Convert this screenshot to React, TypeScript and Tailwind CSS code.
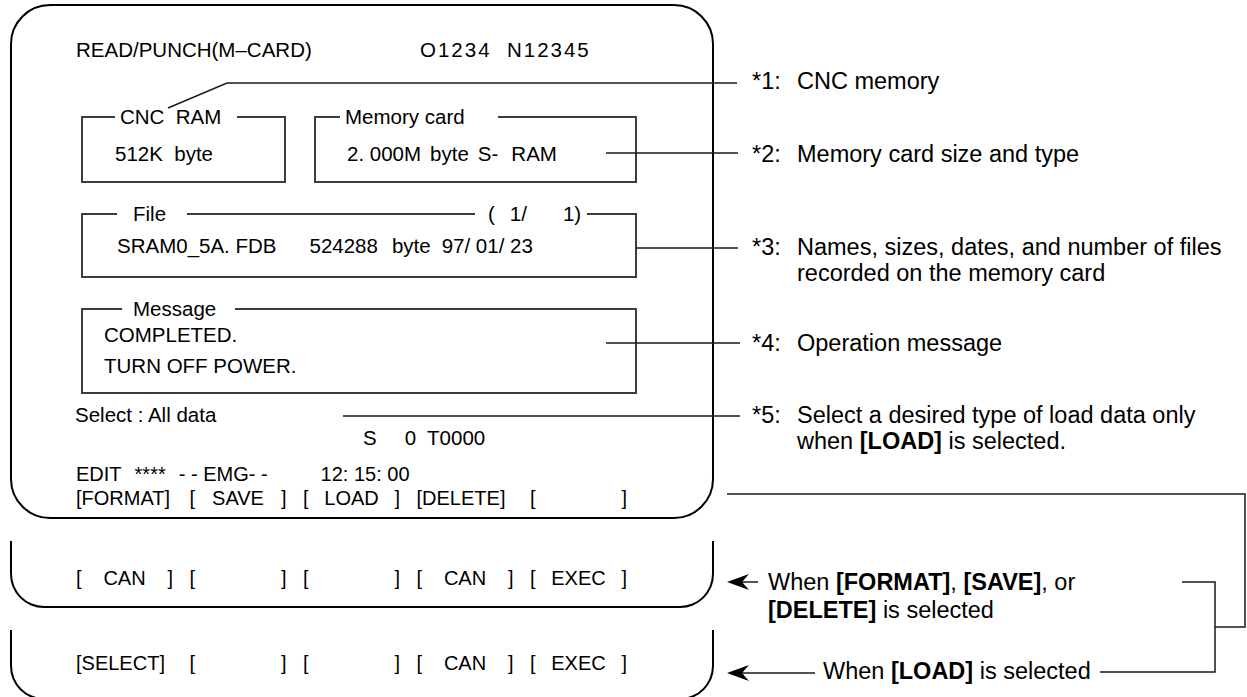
import type { ReactNode } from 'react'

// thin dark segment of a frame's top line
const Seg = ({ w }: { w?: string }) => <span className={`h-[2px] bg-[#3c3c3c] ${w ?? 'flex-1'}`} />

const Frame = ({ top, box, children, className }: { top: ReactNode; box: string; children: ReactNode; className?: string }) => (
    <div className={`flex flex-col ${className ?? ''}`}>
        <div className="relative -mb-[13px] flex h-6 items-center">{top}</div>
        <div className={`border-x-2 border-b-2 border-[#3c3c3c] ${box}`}>{children}</div>
    </div>
)

// soft keys: long labels fill their bracket, short ones are centred in it
const Keys = ({ keys }: { keys: string[] }) => (
    <div className="ml-[64px] grid grid-cols-[repeat(5,97px)] gap-x-[16.5px] text-[20px] leading-6">
        {keys.map((k, i) =>
            k.length >= 6 ? (
                <span key={i}>[{k}]</span>
            ) : (
                <div key={i} className="flex justify-between">
                    <span>[</span>
                    <span>{k}</span>
                    <span>]</span>
                </div>
            )
        )}
    </div>
)

const Note = ({ n, children, className }: { n: number; children: ReactNode; className?: string }) => (
    <div className={`flex leading-[26px] ${className ?? ''}`}>
        <span className="w-[45px] shrink-0">*{n}:</span>
        <span>{children}</span>
    </div>
)

const App = () => {
    return (
        <div className="relative h-[697px] w-[1247px] overflow-hidden bg-white font-[Liberation_Sans,Arial,sans-serif] text-black">
            <div className="flex">

                {/* screens */}
                <div className="flex w-[720px] shrink-0 flex-col pl-[10px] pt-[4px]">
                    <div className="flex h-[515px] w-[704px] flex-col rounded-[40px] border-2 border-black text-[20.5px] leading-6">
                        <div className="ml-[64px] mt-[32px] flex">
                            <span className="w-[344px]">READ/PUNCH(M–CARD)</span>
                            <span className="whitespace-pre tracking-[2px]">O1234  N12345</span>
                        </div>

                        <div className="ml-[69px] mt-[43px] flex gap-[28px]">
                            <Frame
                                className="w-[205px]"
                                box="h-[67px] pl-[32px] pt-[26px]"
                                top={<>
                                    <Seg w="w-[34px]" />
                                    <span className="w-[122px] whitespace-pre pl-[5px]">CNC  RAM</span>
                                    <Seg />
                                </>}
                            >
                                <span className="whitespace-pre">512K  byte</span>
                            </Frame>
                            <Frame
                                className="w-[323px]"
                                box="h-[67px] pl-[31px] pt-[26px]"
                                top={<>
                                    <Seg w="w-[26px]" />
                                    <span className="w-[158px] pl-[5px]">Memory card</span>
                                    <Seg />
                                </>}
                            >
                                <div className="flex">
                                    <span>2. 000M</span>
                                    <span className="ml-[9px]">byte</span>
                                    <span className="ml-[9px]">S-</span>
                                    <span className="ml-[13px]">RAM</span>
                                </div>
                            </Frame>
                        </div>

                        <Frame
                            className="ml-[69px] mt-[19px] w-[556px]"
                            box="h-[65px] pl-[34px] pt-[21px]"
                            top={<>
                                <Seg w="w-[36px]" />
                                <span className="w-[70px] pl-[16px]">File</span>
                                <Seg />
                                <span className="flex w-[112px] pl-[13px]">
                                    <span>(</span>
                                    <span className="ml-[15px]">1/</span>
                                    <span className="ml-[36px]">1)</span>
                                </span>
                                <Seg w="w-[50px]" />
                            </>}
                        >
                            <div className="flex">
                                <span>SRAM0_5A. FDB</span>
                                <span className="ml-[33px]">524288</span>
                                <span className="ml-[14px]">byte</span>
                                <span className="ml-[11px]">97/ 01/ 23</span>
                            </div>
                        </Frame>

                        <Frame
                            className="ml-[69px] mt-[19px] w-[556px]"
                            box="flex h-[86px] flex-col gap-[7px] pl-[21px] pt-[15px]"
                            top={<>
                                <Seg w="w-[41px]" />
                                <span className="w-[113px] pl-[11px]">Message</span>
                                <Seg />
                            </>}
                        >
                            <span>COMPLETED.</span>
                            <span>TURN OFF POWER.</span>
                        </Frame>

                        <div className="ml-[63px] mt-[9px] leading-[23px]">Select : All data</div>
                        <div className="ml-[351px] flex">
                            <span>S</span>
                            <span className="ml-[28px]">0</span>
                            <span className="ml-[11px]">T0000</span>
                        </div>

                        <div className="ml-[64px] mt-[12px] flex text-[20px]">
                            <span>EDIT</span>
                            <span className="ml-[13px]">****</span>
                            <span className="ml-[13px]">- - EMG- -</span>
                            <span className="ml-[53px]">12: 15: 00</span>
                        </div>
                        <Keys keys={['FORMAT', 'SAVE', 'LOAD', 'DELETE', '']} />
                    </div>

                    <div className="mt-[22px] h-[67px] w-[704px] rounded-b-[34px] border-x-2 border-b-2 border-black pt-[25px]">
                        <Keys keys={['CAN', '', '', 'CAN', 'EXEC']} />
                    </div>
                    <div className="mt-[22px] h-[70px] w-[704px] rounded-b-[34px] border-x-2 border-b-2 border-black pt-[21px]">
                        <Keys keys={['SELECT', '', '', 'CAN', 'EXEC']} />
                    </div>
                </div>

                {/* annotations */}
                <div className="flex flex-1 flex-col pl-[32px] text-[23.5px]">
                    <Note n={1} className="mt-[68px]">CNC memory</Note>
                    <Note n={2} className="mt-[47px]">Memory card size and type</Note>
                    <Note n={3} className="mt-[67px]">
                        Names, sizes, dates, and number of files<br />recorded on the memory card
                    </Note>
                    <Note n={4} className="mt-[44px]">Operation message</Note>
                    <Note n={5} className="mt-[46px]">
                        Select a desired type of load data only<br />when <b>[LOAD]</b> is selected.
                    </Note>

                    <p className="ml-[16px] mt-[114px] leading-[28px]">
                        When <b>[FORMAT]</b>, <b>[SAVE]</b>, or<br /><b>[DELETE]</b> is selected
                    </p>
                    <p className="ml-[71px] mt-[34px] leading-[26px]">
                        When <b>[LOAD]</b> is selected
                    </p>
                </div>
            </div>

            {/* leader lines and arrows */}
            <svg
                className="pointer-events-none absolute inset-0"
                width={1247}
                height={697}
                viewBox="0 0 1247 697"
                fill="none"
                stroke="#1a1a1a"
                strokeWidth={1.5}
            >
                <polyline points="168,108 227,83 737,83" />
                <line x1={606} y1={153} x2={738} y2={153} />
                <line x1={636} y1={248} x2={738} y2={248} />
                <line x1={606} y1={343} x2={740} y2={343} />
                <line x1={343} y1={416} x2={740} y2={416} />
                <polyline points="727,494 1245,494 1245,627 1215,627" />
                <polyline points="1182,582 1215,582 1215,672 1100,672" />
                <line x1={738} y1={582} x2={758} y2={582} />
                <line x1={738} y1={673} x2={815} y2={673} />
                <path d="M727 582 L749 574 L742 582 L749 590 Z" fill="#000" stroke="none" />
                <path d="M727 673 L749 665 L742 673 L749 681 Z" fill="#000" stroke="none" />
            </svg>
        </div>
    )
}

export default App
